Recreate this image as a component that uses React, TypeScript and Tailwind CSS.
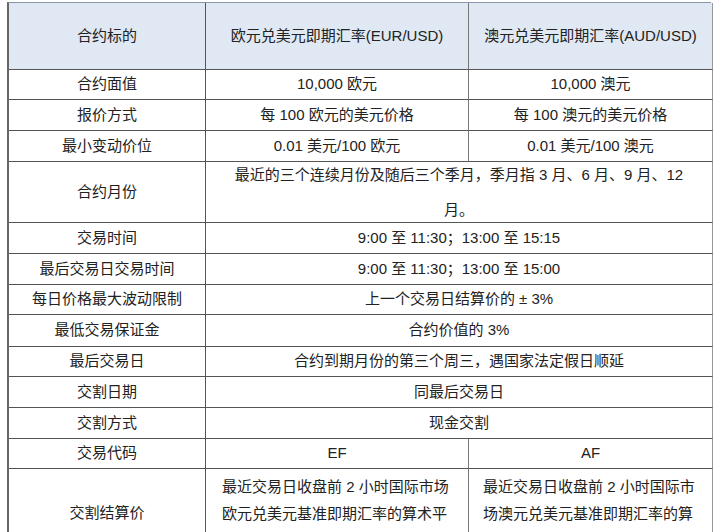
import React from "react";

type Row = {
  label: string;
  h: string;
  span?: React.ReactNode;
  eur?: React.ReactNode;
  aud?: React.ReactNode;
  leading?: string;
};

const rows: Row[] = [
  { label: "合约面值", h: "h-[30px]", eur: "10,000 欧元", aud: "10,000 澳元" },
  { label: "报价方式", h: "h-[31px]", eur: "每 100 欧元的美元价格", aud: "每 100 澳元的美元价格" },
  { label: "最小变动价位", h: "h-[31px]", eur: "0.01 美元/100 欧元", aud: "0.01 美元/100 澳元" },
  {
    label: "合约月份",
    h: "h-[61px]",
    leading: "leading-[35px]",
    span: (
      <>
        <span className="block">最近的三个连续月份及随后三个季月，季月指 3 月、6 月、9 月、12</span>
        <span className="block">月。</span>
      </>
    ),
  },
  { label: "交易时间", h: "h-[31px]", span: "9:00 至 11:30；13:00 至 15:15" },
  { label: "最后交易日交易时间", h: "h-[31px]", span: "9:00 至 11:30；13:00 至 15:00" },
  { label: "每日价格最大波动限制", h: "h-[30px]", span: "上一个交易日结算价的 ± 3%" },
  { label: "最低交易保证金", h: "h-[32px]", span: "合约价值的 3%" },
  { label: "最后交易日", h: "h-[30px]", span: "合约到期月份的第三个周三，遇国家法定假日顺延" },
  { label: "交割日期", h: "h-[31px]", span: "同最后交易日" },
  { label: "交割方式", h: "h-[31px]", span: "现金交割" },
  { label: "交易代码", h: "h-[30px]", eur: "EF", aud: "AF" },
];

const cell = "border-r border-b border-[#555] flex items-center justify-center text-center";

const App = () => {
  return (
    <div
      className="w-[720px] h-[532px] overflow-hidden bg-white pt-[2px] pl-[7px] text-[15px] text-[#222]"
      style={{ fontFamily: '"Liberation Sans", "Noto Sans CJK SC", sans-serif' }}
    >
      <div className="grid grid-cols-[197px_263px_244px] w-[704px] border-t border-t-[#8a97a8] border-l-2 border-l-[#666]">
        {/* header */}
        <div className={`${cell} h-[67px] bg-[#dfe8f3]`}>合约标的</div>
        <div className={`${cell} h-[67px] bg-[#dfe8f3] border-r-[#777]`}>欧元兑美元即期汇率(EUR/USD)</div>
        <div className={`${cell} h-[67px] bg-[#dfe8f3] border-r-[#999]`}>澳元兑美元即期汇率(AUD/USD)</div>

        {rows.map(r => (
          <React.Fragment key={r.label}>
            <div className={`${cell} ${r.h}`}>{r.label}</div>
            {r.span !== undefined ? (
              <div
                className={`${cell} ${r.h} col-span-2 border-r-[#999] ${
                  r.leading ? `${r.leading} items-start flex-col` : ""
                }`}
              >
                {r.leading ? <div className="w-full text-center">{r.span}</div> : r.span}
              </div>
            ) : (
              <>
                <div className={`${cell} ${r.h} border-r-[#777]`}>{r.eur}</div>
                <div className={`${cell} ${r.h} border-r-[#999]`}>{r.aud}</div>
              </>
            )}
          </React.Fragment>
        ))}

        {/* settlement price */}
        <div className={`${cell} h-[90px]`}>交割结算价</div>
        <div className="border-r border-b border-[#555] border-r-[#777] h-[90px] pt-[4px] px-[16px] leading-[27px] text-left">
          <span className="block">最近交易日收盘前 2 小时国际市场</span>
          <span className="block">欧元兑美元基准即期汇率的算术平</span>
          <span className="block">均价</span>
        </div>
        <div className="border-r border-b border-[#555] border-r-[#999] h-[90px] pt-[4px] px-[14px] leading-[27px] text-left">
          <span className="block">最近交易日收盘前 2 小时国际市</span>
          <span className="block">场澳元兑美元基准即期汇率的算</span>
          <span className="block">术平均价</span>
        </div>
      </div>
    </div>
  );
};

export default App;
